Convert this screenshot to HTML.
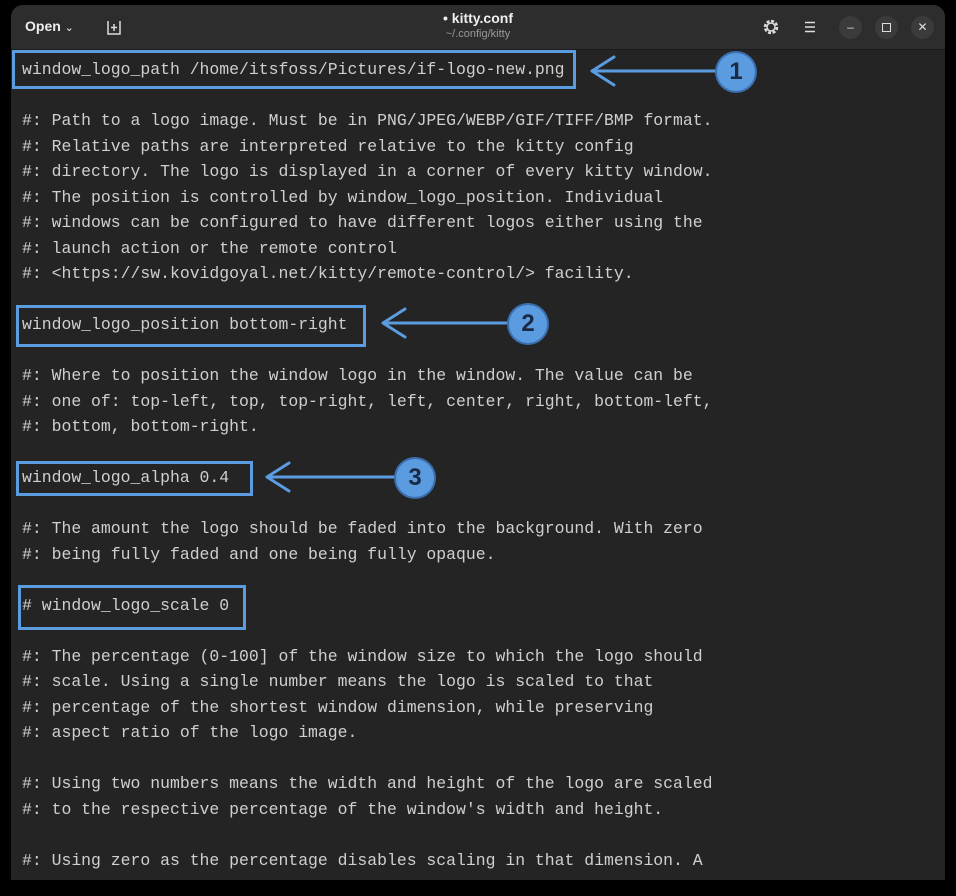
<!DOCTYPE html><html><head><style>
body{margin:0;width:956px;height:896px;background:#000;overflow:hidden;font-family:"Liberation Sans",sans-serif}
.win{position:absolute;left:11px;top:5px;width:934px;height:875px;background:#242424;border-radius:12px 12px 0 0;overflow:hidden}
.hdr{position:absolute;left:0;top:0;width:934px;height:44px;background:#2d2d2d;border-bottom:1px solid #1c1c1c}
.code{position:absolute;left:22px;top:57px;font-family:"Liberation Mono",monospace;font-size:16.45px;line-height:25.5px;color:#cfcfcf;white-space:pre;margin:0}
.box{position:absolute;border:3px solid #5b9be0;box-sizing:border-box}
.c{position:absolute;width:38px;height:38px;border-radius:50%;background:#5b9be0;color:#1a2a44;font-weight:bold;font-size:24px;text-align:center;line-height:38px;box-shadow:0 0 0 2px #3a6fae}
.btn{position:absolute;top:11px;width:23px;height:23px;border-radius:50%;background:#3b3b3b;color:#ddd;font-size:12px;text-align:center;line-height:23px}
</style></head><body>
<div class="win">
<div class="hdr">
<div style="position:absolute;left:14px;top:13px;color:#eee;font-size:14px;font-weight:bold">Open <span style="font-weight:normal;font-size:11px">&#8964;</span></div>
<svg style="position:absolute;left:96px;top:15px" width="14" height="15"><path d="M1 1v13h12V1M7 4v7M4 7.5h6" stroke="#ddd" stroke-width="1.5" fill="none"/></svg>
<div style="position:absolute;left:0;width:934px;top:5px;text-align:center;color:#eee;font-size:14px;font-weight:bold">• kitty.conf</div>
<div style="position:absolute;left:0;width:934px;top:23px;text-align:center;color:#999;font-size:11px">~/.config/kitty</div>
<svg style="position:absolute;left:751px;top:13px" width="18" height="18"><circle cx="9" cy="9" r="6" stroke="#ddd" stroke-width="2.5" fill="none" stroke-dasharray="3 1.7"/><circle cx="9" cy="9" r="4" stroke="#ddd" stroke-width="1.5" fill="none"/></svg>
<svg style="position:absolute;left:793px;top:16px" width="12" height="12"><path d="M1 1.5h10M1 6h10M1 10.5h10" stroke="#ddd" stroke-width="1.6"/></svg>
<div class="btn" style="left:828px">&#8211;</div>
<div class="btn" style="left:864px"><span style="display:inline-block;width:7px;height:7px;border:1.5px solid #ddd;margin-top:7px;vertical-align:top"></span></div>
<div class="btn" style="left:900px">&#10005;</div>
</div>
</div>
<pre class="code">window_logo_path /home/itsfoss/Pictures/if-logo-new.png

#: Path to a logo image. Must be in PNG/JPEG/WEBP/GIF/TIFF/BMP format.
#: Relative paths are interpreted relative to the kitty config
#: directory. The logo is displayed in a corner of every kitty window.
#: The position is controlled by window_logo_position. Individual
#: windows can be configured to have different logos either using the
#: launch action or the remote control
#: &lt;https://sw.kovidgoyal.net/kitty/remote-control/&gt; facility.

window_logo_position bottom-right

#: Where to position the window logo in the window. The value can be
#: one of: top-left, top, top-right, left, center, right, bottom-left,
#: bottom, bottom-right.

window_logo_alpha 0.4

#: The amount the logo should be faded into the background. With zero
#: being fully faded and one being fully opaque.

# window_logo_scale 0

#: The percentage (0-100] of the window size to which the logo should
#: scale. Using a single number means the logo is scaled to that
#: percentage of the shortest window dimension, while preserving
#: aspect ratio of the logo image.

#: Using two numbers means the width and height of the logo are scaled
#: to the respective percentage of the window's width and height.

#: Using zero as the percentage disables scaling in that dimension. A</pre>
<div class="box" style="left:12px;top:50px;width:564px;height:39px"></div>
<div class="box" style="left:16px;top:305px;width:350px;height:42px"></div>
<div class="box" style="left:16px;top:461px;width:237px;height:35px"></div>
<div class="box" style="left:18px;top:585px;width:228px;height:45px"></div>
<svg style="position:absolute;left:0;top:0" width="956" height="896"><g stroke="#5b9be0" stroke-width="3" fill="none" stroke-linecap="round">
<path d="M592 71H718M592 71l22-14M592 71l22 14"/>
<path d="M383 323H510M383 323l22-14M383 323l22 14"/>
<path d="M267 477H397M267 477l22-14M267 477l22 14"/></g></svg>
<div class="c" style="left:717px;top:53px">1</div>
<div class="c" style="left:509px;top:305px">2</div>
<div class="c" style="left:396px;top:459px">3</div>
</body></html>
